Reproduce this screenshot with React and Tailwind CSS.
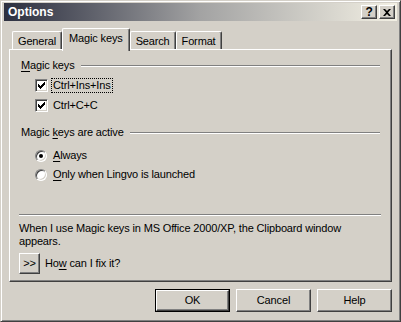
const font = { fontFamily: '"Liberation Sans", Arial, sans-serif' }

const raised =
  'border border-t-white border-l-white border-r-[#404040] border-b-[#404040] shadow-[inset_-1px_-1px_#808080]'

function CheckBox() {
  return (
    <span className="flex h-[13px] w-[13px] items-center justify-center border border-t-[#808080] border-l-[#808080] border-r-white border-b-white bg-white shadow-[inset_1px_1px_#404040,inset_-1px_-1px_#d4d0c8]">
      <svg width="7" height="7" viewBox="0 0 7 7">
        <path d="M0 2h1v1h1v1h1v-1h1v-1h1v-1h1v-1h1v3h-1v1h-1v1h-1v1h-1v1h-1v-1h-1v-1h-1z" fill="#000" />
      </svg>
    </span>
  )
}

function Radio({ on }) {
  return (
    <span className="flex h-[12px] w-[12px] items-center justify-center rounded-full border border-t-[#808080] border-l-[#808080] border-r-white border-b-white bg-white shadow-[inset_1px_1px_#404040,inset_-1px_-1px_#d4d0c8]">
      {on && <span className="h-[4px] w-[4px] rounded-full bg-black" />}
    </span>
  )
}

function GroupLabel({ children }) {
  return (
    <div className="flex items-center gap-[6px]">
      <span className="whitespace-nowrap">{children}</span>
      <div className="h-[2px] flex-1 border-t border-t-[#808080] border-b border-b-white" />
    </div>
  )
}

function Tab({ label, active }) {
  return active ? (
    <div className="relative z-10 -mb-[2px] flex h-[23px] items-start rounded-t-[2px] border border-b-0 border-t-white border-l-white border-r-[#404040] bg-[#d4d0c8] px-[6px] pt-[3px] shadow-[inset_-1px_0_#808080]">
      {label}
    </div>
  ) : (
    <div className="flex h-[18px] items-start rounded-t-[2px] border border-b-0 border-t-white border-l-white border-r-[#404040] px-[5px] pt-[3px] shadow-[inset_-1px_0_#808080]">
      {label}
    </div>
  )
}

export default function App() {
  return (
    <div
      style={font}
      className="flex h-[322px] w-[401px] flex-col border border-t-[#d4d0c8] border-l-[#d4d0c8] border-r-[#404040] border-b-[#404040] bg-[#d4d0c8] text-[11px] leading-[13px] tracking-[-0.15px] text-black shadow-[inset_1px_1px_#fff,inset_-1px_-1px_#808080]"
    >
      <div className="mx-[3px] mt-[2px] flex h-[18px] items-center bg-gradient-to-r from-[#2d3040] via-[#a3a3a3] to-[#f3f0e4] pl-[4px] pr-[2px]">
        <span className="flex-1 text-[12px] font-bold tracking-normal text-white">Options</span>
        <div className="flex gap-[2px]">
          <span className={`flex h-[14px] w-[16px] items-center justify-center bg-[#d4d0c8] text-[12px] font-bold leading-none ${raised}`}>?</span>
          <span className={`flex h-[14px] w-[16px] items-center justify-center bg-[#d4d0c8] ${raised}`}>
            <svg width="8" height="7" viewBox="0 0 8 7">
              <path d="M0 0h2l2 2 2-2h2L5 3.5 8 7H6L4 5 2 7H0l3-3.5z" fill="#000" />
            </svg>
          </span>
        </div>
      </div>

      <div className="ml-[11px] mt-[7px] flex items-end">
        <Tab label="General" />
        <Tab label="Magic keys" active />
        <Tab label="Search" />
        <Tab label="Format" />
      </div>

      <div className="ml-[8px] flex h-[233px] w-[383px] flex-col border border-t-white border-l-white border-r-[#404040] border-b-[#404040] pl-[9px] pr-[10px] pt-[9px] shadow-[inset_-1px_-1px_#808080]">
        <div className="pl-[2px] pr-[1px]">
          <GroupLabel>
            <span className="underline underline-offset-[2px]">M</span>agic keys
          </GroupLabel>
        </div>
        <div className="ml-[16px] mt-[7px] flex flex-col gap-[7px]">
          <div className="flex items-center gap-[4px]">
            <CheckBox />
            <span className="outline outline-1 outline-dotted outline-black px-[1px]">Ctrl+Ins+Ins</span>
          </div>
          <div className="flex items-center gap-[4px]">
            <CheckBox />
            <span className="px-[1px]">Ctrl+C+C</span>
          </div>
        </div>

        <div className="mt-[14px] pl-[2px] pr-[1px]">
          <GroupLabel>
            Magic <span className="underline underline-offset-[2px]">k</span>eys are active
          </GroupLabel>
        </div>
        <div className="ml-[16px] mt-[10px] flex flex-col gap-[6px]">
          <div className="flex items-center gap-[6px]">
            <Radio on />
            <span>
              <span className="underline underline-offset-[2px]">A</span>lways
            </span>
          </div>
          <div className="flex items-center gap-[6px]">
            <Radio />
            <span>
              <span className="underline underline-offset-[2px]">O</span>nly when Lingvo is launched
            </span>
          </div>
        </div>

        <div className="mt-[33px] h-[2px] border-t border-t-[#808080] border-b border-b-white" />
        <p className="mt-[6px] pr-[20px]">
          When I use Magic keys in MS Office 2000/XP, the Clipboard window appears.
        </p>
        <div className="mt-[5px] flex items-center gap-[5px]">
          <span className={`flex h-[21px] w-[21px] items-center justify-center bg-[#d4d0c8] text-[11px] ${raised}`}>&gt;&gt;</span>
          <span>
            Ho<span className="underline underline-offset-[2px]">w</span> can I fix it?
          </span>
        </div>
      </div>

      <div className="mr-[8px] mt-[7px] flex justify-end gap-[6px]">
        <div className="flex h-[23px] w-[75px] items-center justify-center border border-black">
          <div className={`flex h-full w-full items-center justify-center ${raised}`}>OK</div>
        </div>
        <div className={`flex h-[23px] w-[75px] items-center justify-center ${raised}`}>Cancel</div>
        <div className={`flex h-[23px] w-[75px] items-center justify-center ${raised}`}>Help</div>
      </div>
    </div>
  )
}
